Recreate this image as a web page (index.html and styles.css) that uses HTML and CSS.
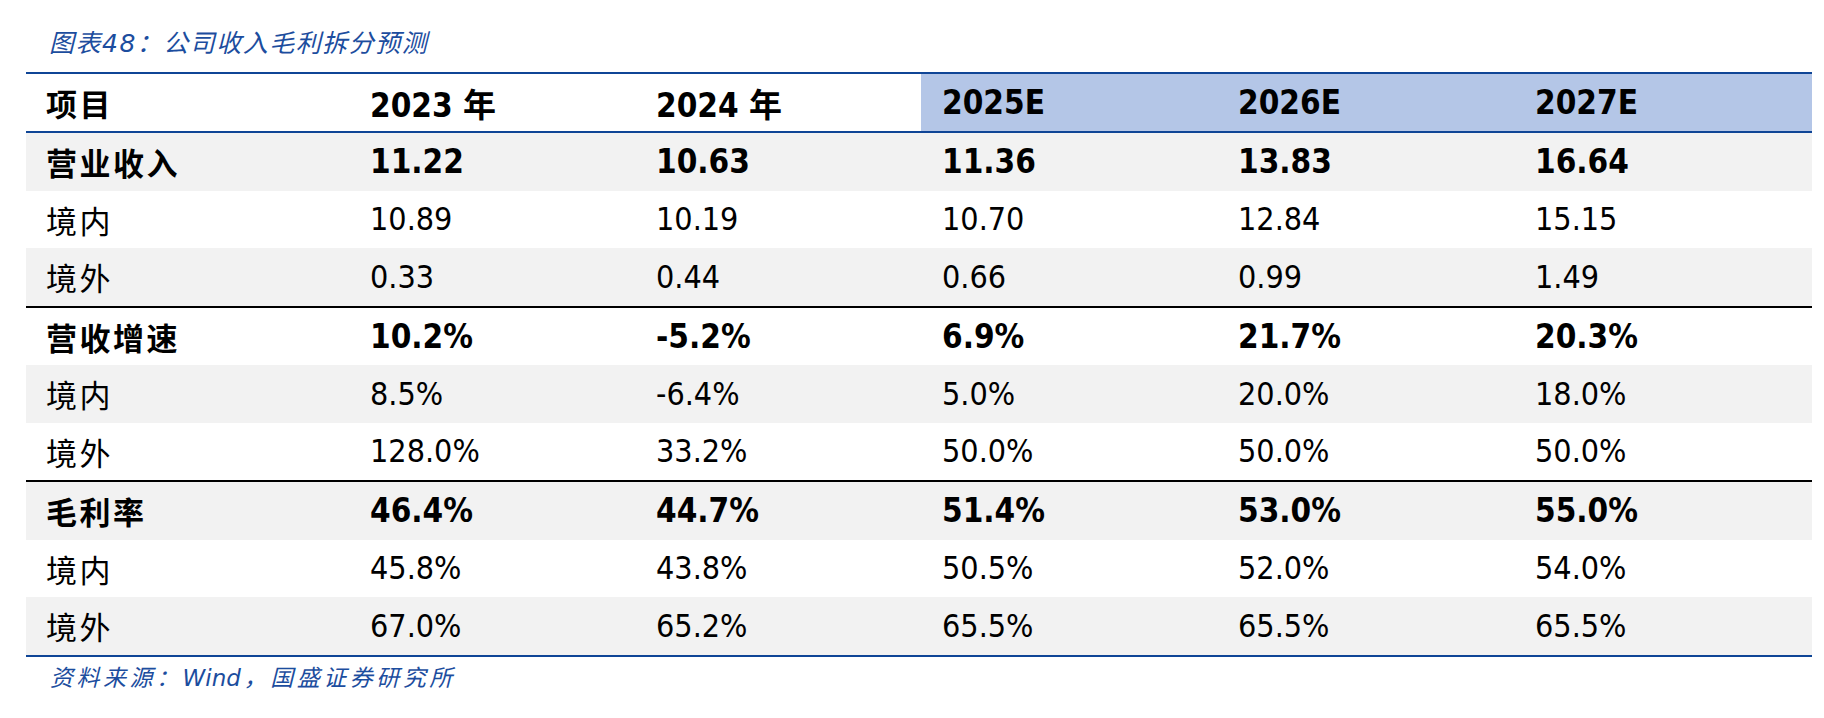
FILE: index.html
```html
<!DOCTYPE html>
<html lang="zh">
<head>
<meta charset="utf-8">
<title>图表48</title>
<link rel="stylesheet" href="styles.css">
</head>
<body>
<div class="page">
  <div class="caption">图表48：公司收入毛利拆分预测</div>
  <div class="table">
    <div class="row head">
      <div class="cell label">项目</div>
      <div class="cell">2023 年</div>
      <div class="cell">2024 年</div>
      <div class="cell est">2025E</div>
      <div class="cell est">2026E</div>
      <div class="cell est">2027E</div>
    </div>

    <div class="row main gray">
      <div class="cell label">营业收入</div>
      <div class="cell">11.22</div>
      <div class="cell">10.63</div>
      <div class="cell">11.36</div>
      <div class="cell">13.83</div>
      <div class="cell">16.64</div>
    </div>
    <div class="row">
      <div class="cell label">境内</div>
      <div class="cell">10.89</div>
      <div class="cell">10.19</div>
      <div class="cell">10.70</div>
      <div class="cell">12.84</div>
      <div class="cell">15.15</div>
    </div>
    <div class="row gray">
      <div class="cell label">境外</div>
      <div class="cell">0.33</div>
      <div class="cell">0.44</div>
      <div class="cell">0.66</div>
      <div class="cell">0.99</div>
      <div class="cell">1.49</div>
    </div>

    <div class="row main group">
      <div class="cell label">营收增速</div>
      <div class="cell">10.2%</div>
      <div class="cell">-5.2%</div>
      <div class="cell">6.9%</div>
      <div class="cell">21.7%</div>
      <div class="cell">20.3%</div>
    </div>
    <div class="row gray">
      <div class="cell label">境内</div>
      <div class="cell">8.5%</div>
      <div class="cell">-6.4%</div>
      <div class="cell">5.0%</div>
      <div class="cell">20.0%</div>
      <div class="cell">18.0%</div>
    </div>
    <div class="row">
      <div class="cell label">境外</div>
      <div class="cell">128.0%</div>
      <div class="cell">33.2%</div>
      <div class="cell">50.0%</div>
      <div class="cell">50.0%</div>
      <div class="cell">50.0%</div>
    </div>

    <div class="row main group gray">
      <div class="cell label">毛利率</div>
      <div class="cell">46.4%</div>
      <div class="cell">44.7%</div>
      <div class="cell">51.4%</div>
      <div class="cell">53.0%</div>
      <div class="cell">55.0%</div>
    </div>
    <div class="row">
      <div class="cell label">境内</div>
      <div class="cell">45.8%</div>
      <div class="cell">43.8%</div>
      <div class="cell">50.5%</div>
      <div class="cell">52.0%</div>
      <div class="cell">54.0%</div>
    </div>
    <div class="row gray">
      <div class="cell label">境外</div>
      <div class="cell">67.0%</div>
      <div class="cell">65.2%</div>
      <div class="cell">65.5%</div>
      <div class="cell">65.5%</div>
      <div class="cell">65.5%</div>
    </div>
  </div>
  <div class="source">资料来源：<span class="latin">Wind</span>，国盛证券研究所</div>
</div>
</body>
</html>
```
FILE: styles.css
```css
html, body {
  margin: 0;
  padding: 0;
  background: #ffffff;
}

.page {
  width: 1824px;
  height: 718px;
  padding-top: 29px;
  box-sizing: border-box;
  font-family: "DejaVu Sans Condensed", "DejaVu Sans", "Noto Sans CJK SC", sans-serif;
  font-stretch: semi-condensed;
  color: #000;
}

.caption {
  margin-left: 49px;
  height: 30px;
  line-height: 30px;
  font-size: 25px;
  font-style: italic;
  letter-spacing: 1.5px;
  color: #1c4d9e;
  font-family: "DejaVu Sans", "Noto Sans CJK SC", sans-serif;
  font-stretch: normal;
}

.table {
  margin-top: 13px;
  margin-left: 26px;
  width: 1786px;
  border-top: 2px solid #0f4596;
  border-bottom: 2px solid #0f4596;
}

.row {
  display: grid;
  grid-template-columns: 323px 286px 286px 296px 297px 298px;
  height: 57.5px;
  font-size: 32px;
}

.row.head {
  height: 57px;
  border-bottom: 2px solid #0f4596;
  font-weight: bold;
  font-size: 33px;
}

.row.main {
  font-weight: bold;
  font-size: 33px;
}

.row.group {
  border-top: 2px solid #000;
}

.row.gray {
  background: #f2f2f2;
}

.cell {
  display: flex;
  align-items: center;
  padding-left: 21px;
  white-space: nowrap;
}

.cell.label {
  padding-left: 20px;
  font-family: "Noto Sans CJK SC", sans-serif;
  font-size: 31px;
  letter-spacing: 2.5px;
  font-weight: normal;
}

.row.main .cell.label,
.row.head .cell.label {
  font-weight: 700;
}

.cell.est {
  background: #b4c6e7;
}

.source {
  margin-top: 6px;
  margin-left: 50px;
  height: 30px;
  line-height: 30px;
  font-size: 23px;
  font-style: italic;
  letter-spacing: 3.5px;
  color: #1c4d9e;
  font-family: "DejaVu Sans", "Noto Sans CJK SC", sans-serif;
  font-stretch: normal;
}

.source .latin {
  letter-spacing: 0;
  margin-right: 3px;
}
```
